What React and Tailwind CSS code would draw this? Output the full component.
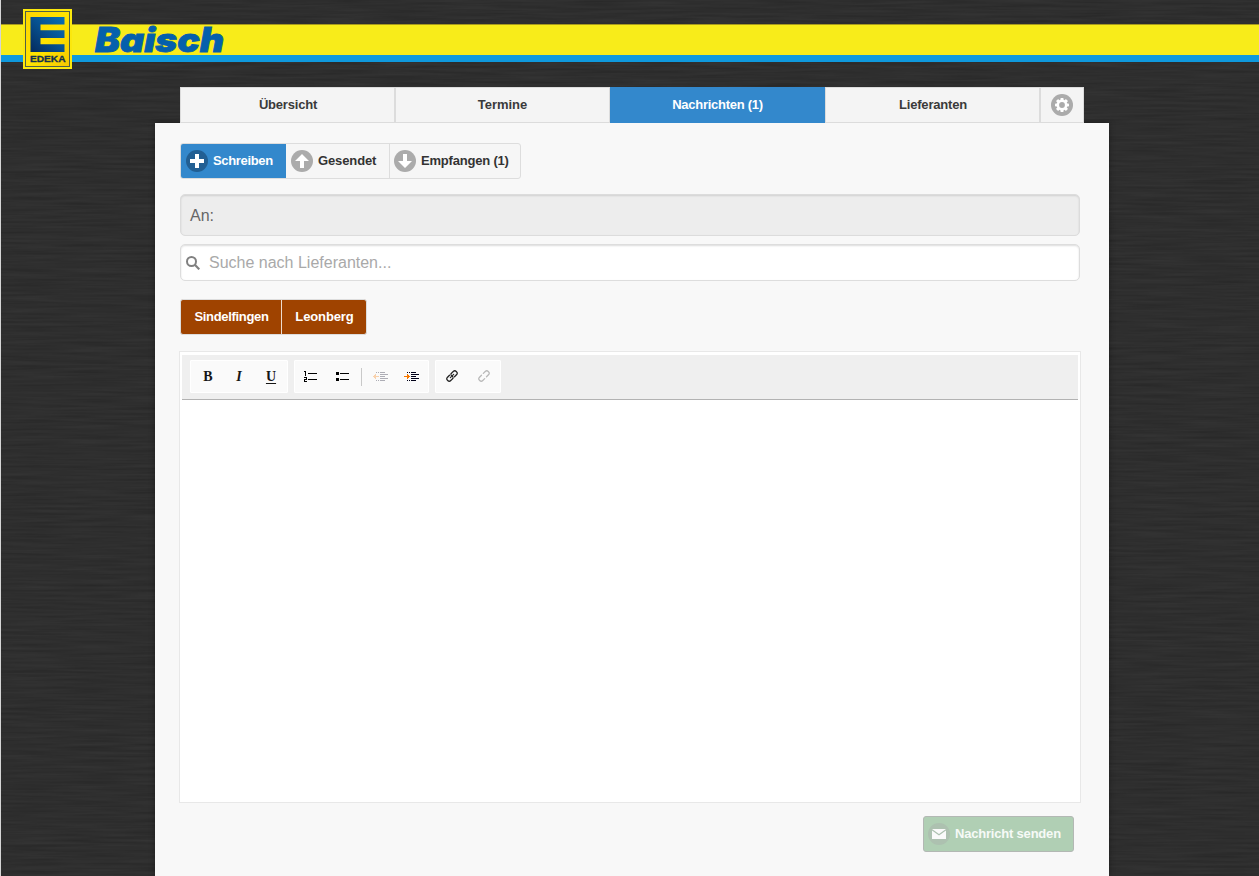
import React from "react";

function WoodTexture() {
  return (
    <svg className="absolute inset-0 -z-10 h-full w-full" aria-hidden="true">
      <filter id="grain" x="0" y="0" width="100%" height="100%" colorInterpolationFilters="sRGB">
        <feTurbulence type="fractalNoise" baseFrequency="0.016 0.38" numOctaves="2" seed="7" />
        <feColorMatrix values="0.06 0 0 0 0.151  0.06 0 0 0 0.151  0.06 0 0 0 0.151  0 0 0 0 1" />
      </filter>
      <rect width="100%" height="100%" fill="#2e2e2e" />
      <rect width="100%" height="100%" filter="url(#grain)" />
    </svg>
  );
}

function Disc({ fill, children }) {
  return (
    <svg className="size-[22px] shrink-0" viewBox="0 0 22 22">
      <circle cx="11" cy="11" r="11" fill={fill} />
      {children}
    </svg>
  );
}

function GearIcon() {
  return (
    <Disc fill="#ababab">
      <g fill="#fff">
        {[0, 45, 90, 135].map((a) => (
          <rect key={a} x="9.4" y="4" width="3.2" height="14" rx="0.8" transform={`rotate(${a} 11 11)`} />
        ))}
        <circle cx="11" cy="11" r="5.4" />
      </g>
      <circle cx="11" cy="11" r="2.9" fill="#ababab" />
    </Disc>
  );
}

function EdekaLogo() {
  return (
    <svg className="h-[60px] w-[49px] shrink-0" viewBox="0 0 49 60">
      <defs>
        <linearGradient id="eblue" x1="1" y1="0" x2="0" y2="1">
          <stop offset="0" stopColor="#0870b8" />
          <stop offset="0.5" stopColor="#07508f" />
          <stop offset="1" stopColor="#042a5c" />
        </linearGradient>
        <linearGradient id="eyellow" x1="0" y1="0" x2="1" y2="1">
          <stop offset="0" stopColor="#fdd400" />
          <stop offset="0.5" stopColor="#ffe400" />
          <stop offset="1" stopColor="#f6c800" />
        </linearGradient>
      </defs>
      <rect width="49" height="60" fill="#fbe80d" />
      <rect x="2.5" y="2.5" width="44" height="55" fill="url(#eyellow)" stroke="#4f6048" />
      <path d="M7.500 8H41.500V15.500H17.500V21.300H41.500V29H17.500V35.300H41.500V43H7.500Z" fill="url(#eblue)" />
      <text x="7" y="52.500" textLength="35.500" lengthAdjust="spacingAndGlyphs" fontFamily="Liberation Sans, sans-serif" fontWeight="700" fontSize="8.500" fill="#12304f" stroke="#12304f" strokeWidth="0.3">EDEKA</text>
    </svg>
  );
}

function Header() {
  return (
    <header className="flex h-[87px] flex-col pt-6">
      <div className="flex h-[38px] items-start border-t border-t-[#a79a1c] border-b-[7px] border-b-[#0f99dd] bg-[#f8ec1a] pl-[23px]">
        <div className="-mt-4 flex">
          <EdekaLogo />
          <svg className="mt-1 ml-[15px] h-[50px] w-[150px] overflow-visible" viewBox="0 0 150 50">
            <text x="8" y="38.600" textLength="129" lengthAdjust="spacingAndGlyphs" fontFamily="Inter, sans-serif" fontStyle="italic" fontWeight="900" fontSize="33.500" fill="#0560ac" stroke="#0560ac" strokeWidth="0.8">Baisch</text>
          </svg>
        </div>
      </div>
    </header>
  );
}

function Tabs() {
  const tab = "flex items-center justify-center border border-[#dcdcdc] bg-[#f4f4f4] pb-px text-[#3a3a3a]";
  return (
    <nav className="relative z-10 ml-[180px] grid h-9 w-[904px] grid-cols-[215px_215px_215px_215px_44px] text-[13px] font-bold">
      <a className={tab + " pl-px tracking-[-0.2px]"}>Übersicht</a>
      <a className={tab}>Termine</a>
      <a className="flex items-center justify-center bg-[#3388cc] pb-px tracking-[-0.27px] text-white">Nachrichten (1)</a>
      <a className={tab + " pl-px tracking-[-0.2px]"}>Lieferanten</a>
      <a className="flex items-center justify-center border border-[#dcdcdc] bg-[#f4f4f4]"><GearIcon /></a>
    </nav>
  );
}

function MessageFilter() {
  return (
    <div className="flex h-9 w-[341px] overflow-hidden rounded-[3px] border border-[#dddddd] bg-[#f6f6f6] text-[13px] font-bold text-[#333]">
      <a className="flex w-[105px] items-center gap-[5px] bg-[#3388cc] pl-[5px] tracking-[-0.33px] text-white">
        <Disc fill="#225f93"><path d="M9 4h4v5h5v4h-5v5h-4v-5h-5v-4h5z" fill="#fff" /></Disc>
        Schreiben
      </a>
      <a className="flex w-[103px] items-center gap-[5px] pl-[5px] tracking-[-0.12px]">
        <Disc fill="#ababab"><path d="M11 4l7 7h-5v7h-4v-7h-5z" fill="#fff" /></Disc>
        Gesendet
      </a>
      <a className="flex flex-1 items-center gap-[5px] border-l border-[#dddddd] pl-1 tracking-[-0.2px]">
        <Disc fill="#ababab"><path d="M11 18l7-7h-5V4H9v7H4z" fill="#fff" /></Disc>
        Empfangen (1)
      </a>
    </div>
  );
}

function ListRows({ bullets }) {
  return (
    <svg className="h-[14px] w-[14px]" viewBox="0 0 14 14" shapeRendering="crispEdges">
      {bullets ? (
        <path d="M1 2h3v3H1zM1 8h3v3H1z" />
      ) : (
        <path d="M1 1h2v5H2V2H1zM1 7h3v3H2v1h2v1H1v-3h2V8H1z" />
      )}
      <path d="M5 3h9v1H5zM5 9h9v1H5z" />
    </svg>
  );
}

function IndentIcon({ outdent }) {
  return (
    <svg className={outdent ? "h-[9px] w-4 opacity-30" : "h-[9px] w-4"} viewBox="0 0 16 9" shapeRendering="crispEdges">
      <path d="M3 0h1v1H3zM5 0h1v1H5zM7 0h5v1H7zM7 2h8v1H7zM7 4h5v1H7zM7 6h8v1H7zM3 8h1v1H3zM5 8h1v1H5zM7 8h5v1H7z" fill="#000018" />
      <path d={outdent ? "M6 4H3V2H2V3H1V4H0v1h1v1h1v1h1V5h3z" : "M0 4h3V2h1v1h1v1h1v1H5v1H4v1H3V5H0z"} fill="#f77800" />
    </svg>
  );
}

function LinkIcon({ faded }) {
  return (
    <svg className={faded ? "-mt-px h-3 w-3 opacity-30" : "-mt-px h-3 w-3"} viewBox="0 0 12 12" fill="none" stroke="#222" strokeLinecap="round" strokeLinejoin="round">
      <path d="M5.300 3.400 7.500 1.300a1.700 1.700 0 0 1 2.500 0l.7.7a1.700 1.700 0 0 1 0 2.500L8.500 6.700" strokeWidth="1.300" />
      <path d="M6.700 8.600 4.500 10.700a1.700 1.700 0 0 1-2.500 0l-.7-.7a1.700 1.700 0 0 1 0-2.500L3.500 5.300" strokeWidth="1.300" />
      {!faded && <path d="M5.300 3.400a1.500 1.500 0 0 0 .5 2.400M6.700 8.600a1.500 1.500 0 0 0-.5-2.400M4.300 7.700l3.400-3.400" strokeWidth="1.100" />}
    </svg>
  );
}

function Editor() {
  const group = "flex h-[33px] items-center rounded-[1px] border border-white bg-[#fafafa]";
  const slot = "flex w-8 shrink-0 items-center justify-center";
  return (
    <section className="-ml-px mt-4 flex h-[452px] w-[902px] flex-col border border-[#e8e8e8] bg-white px-[2px] pt-[3px] pb-px">
      <div className="flex h-[45px] w-[896px] shrink-0 gap-[6px] border-b border-[#b2b2b2] bg-[#efefef] pt-[5px] pl-2">
        <div className={group + " w-[98px] pl-px font-['Liberation_Serif',serif] text-sm font-bold text-[#161616]"}>
          <span className={slot}>B</span>
          <span className={slot + " -ml-px italic"}>I</span>
          <span className={slot + " underline underline-offset-2"}>U</span>
        </div>
        <div className={group + " w-[135px]"}>
          <span className={slot + " -ml-px"}><ListRows /></span>
          <span className={slot}><ListRows bullets /></span>
          <span className="mr-[3px] ml-[3px] h-[18px] w-px shrink-0 bg-[#c9c9c9]" />
          <span className={slot}><IndentIcon outdent /></span>
          <span className={slot + " -ml-px"}><IndentIcon /></span>
        </div>
        <div className={group + " w-[66px]"}>
          <span className={slot}><LinkIcon /></span>
          <span className={slot}><LinkIcon faded /></span>
        </div>
      </div>
    </section>
  );
}

export default function App() {
  return (
    <div className="relative isolate flex h-[876px] w-[1259px] flex-col overflow-hidden border-l border-[#d5d5d5] bg-[#2e2e2e] font-['Liberation_Sans',Arial,sans-serif]">
      <WoodTexture />
      <div className="-ml-px flex flex-1 flex-col pl-px [&>*]:-ml-px">
        <Header />
        <div className="flex flex-1 flex-col">
          <Tabs />
          <main className="ml-[155px] flex w-[954px] flex-1 flex-col bg-[#f8f8f8] pt-5 pl-[25px] shadow-[0_0_6px_rgba(0,0,0,0.35)]">
            <MessageFilter />
            <div className="mt-[15px] flex h-[42px] w-[900px] items-center rounded-[5px] border border-[#dcdcdc] bg-[#ededed] pt-[2px] pl-[9px] text-base text-[#666] shadow-[inset_0_1px_2px_rgba(0,0,0,0.12)]">
              An:
            </div>
            <div className="mt-2 flex h-[37px] w-[900px] items-center rounded-[5px] border border-[#dddddd] bg-white pl-[5px] text-base text-[#a9a9a9] shadow-[inset_0_1px_2px_rgba(0,0,0,0.14)]">
              <svg className="mr-[9px] h-[14px] w-[14px] shrink-0" viewBox="0 0 14 14" fill="none" stroke="#808080" strokeWidth="2">
                <circle cx="5.500" cy="5.500" r="4.500" />
                <path d="M8.800 8.800l4.500 4.500" strokeWidth="2.200" />
              </svg>
              Suche nach Lieferanten...
            </div>
            <div className="mt-[18px] flex h-9 w-[187px] overflow-hidden rounded-[3px] border border-[#dddddd] bg-[#9f4300] text-[13px] font-bold text-white">
              <a className="flex w-[101px] items-center justify-center border-r border-[#eddccf] pl-px tracking-[-0.33px]">Sindelfingen</a>
              <a className="flex flex-1 items-center justify-center pl-px tracking-[-0.12px]">Leonberg</a>
            </div>
            <Editor />
            <button className="mt-[13px] ml-[743px] flex h-9 w-[151px] items-center gap-[5px] rounded-[3px] border border-[#b3b8b4] bg-[#b0cfb4] pl-[4px] text-[13px] font-bold tracking-[-0.2px] whitespace-nowrap text-[#f6faf7]">
              <Disc fill="#adc1b0">
                <path d="M4 6h14l-7 5z" fill="#fafafa" />
                <path d="M4 7.500v8.500h14V7.500l-7 5z" fill="#fafafa" />
              </Disc>
              Nachricht senden
            </button>
          </main>
        </div>
      </div>
    </div>
  );
}
